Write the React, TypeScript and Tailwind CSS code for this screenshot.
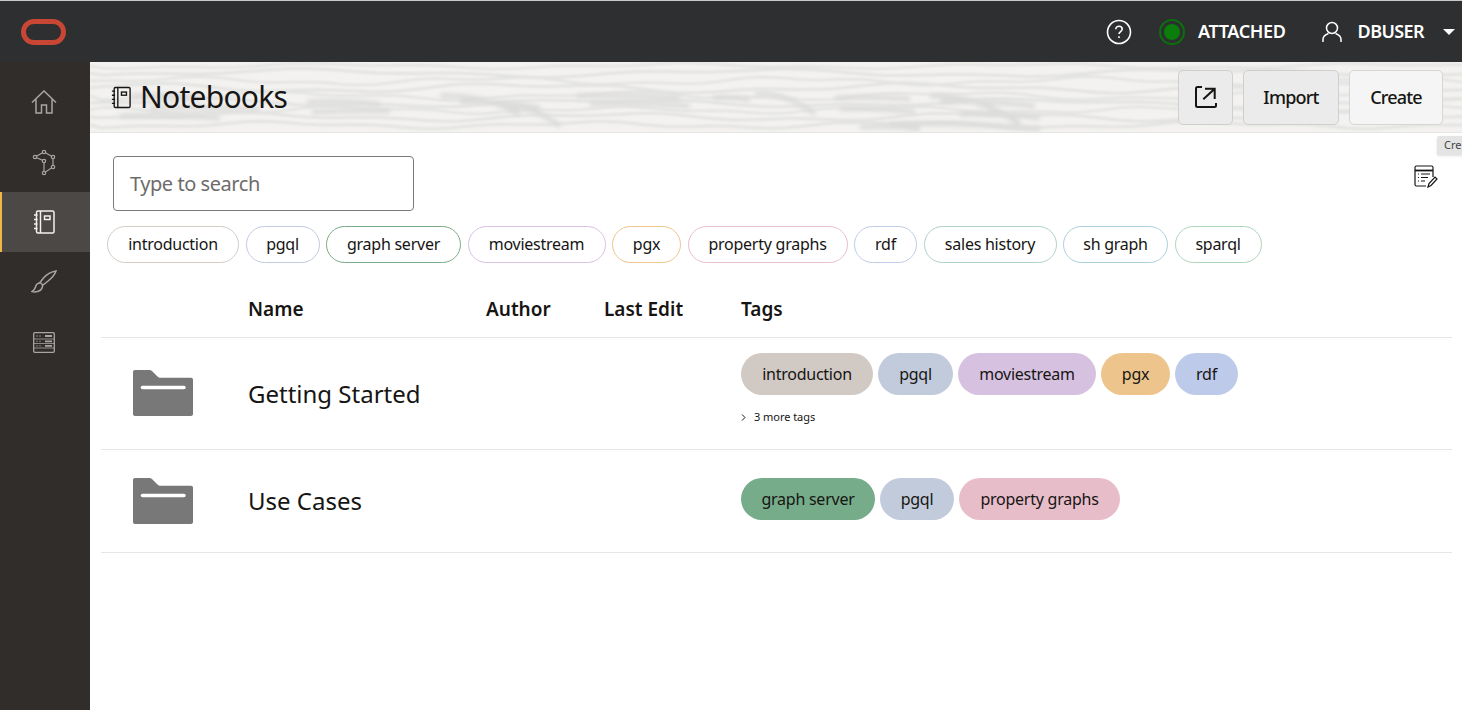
const font = { fontFamily: '"Noto Sans", sans-serif' }

const filterTags = [
  { label: 'introduction', border: 'border-[#d4cdc6]', w: 'w-[132px]' },
  { label: 'pgql', border: 'border-[#c2cbdd]', w: 'w-[74px]' },
  { label: 'graph server', border: 'border-[#7bab89]', w: 'w-[135px]' },
  { label: 'moviestream', border: 'border-[#d9c2e0]', w: 'w-[138px]' },
  { label: 'pgx', border: 'border-[#eec58c]', w: 'w-[69px]' },
  { label: 'property graphs', border: 'border-[#e9bfcb]', w: 'w-[160px]' },
  { label: 'rdf', border: 'border-[#bfcbe9]', w: 'w-[63px]' },
  { label: 'sales history', border: 'border-[#b0d2cb]', w: 'w-[133px]' },
  { label: 'sh graph', border: 'border-[#abd0dc]', w: 'w-[105px]' },
  { label: 'sparql', border: 'border-[#aed6ba]', w: 'w-[87px]' }
]

const wave = (y: number, amp: number, f: number, p: number) => {
  let d = `M0 ${y}`
  for (let x = 12; x <= 1380; x += 12) {
    const v = y + amp * Math.sin(x * f + p) + (amp / 2) * Math.sin(x * f * 2.7 + p * 1.8)
    d += ` L${x} ${v.toFixed(1)}`
  }
  return d
}

const waves = [
  [4, 2, 0.018, 0.4, 2.5],
  [11, 3, 0.014, 1.7, 3],
  [19, 3, 0.021, 2.6, 2.5],
  [26, 3.5, 0.016, 4.1, 3],
  [34, 3, 0.019, 0.9, 2.5],
  [41, 3, 0.015, 3.2, 3],
  [48, 2.5, 0.023, 5.1, 2.5],
  [55, 3, 0.017, 2.1, 3],
  [63, 2.5, 0.02, 1.1, 3]
]

const patches = [
  [40, 34, 110, 35],
  [60, 46, 170, 47],
  [30, 54, 130, 56],
  [217, 40, 290, 42],
  [222, 50, 300, 49],
  [350, 34, 430, 52],
  [370, 40, 450, 46],
  [410, 44, 470, 64],
  [487, 34, 590, 36],
  [500, 42, 600, 44],
  [623, 36, 660, 38],
  [665, 32, 725, 52],
  [745, 36, 820, 37],
  [750, 47, 825, 50],
  [770, 65, 830, 67],
  [840, 34, 930, 62],
  [850, 40, 945, 44],
  [870, 52, 950, 56],
  [800, 62, 950, 67]
]

function Banner() {
  return (
    <svg className="absolute inset-0 h-full w-full" viewBox="0 0 1372 70" preserveAspectRatio="none">
      <defs>
        <filter id="soft">
          <feGaussianBlur stdDeviation="0.9" />
        </filter>
        <filter id="softer">
          <feGaussianBlur stdDeviation="2.2" />
        </filter>
      </defs>
      <g fill="none" stroke="#e3e3e1" filter="url(#soft)">
        {waves.map(([y, a, f, p, w]) => (
          <path key={y} d={wave(y, a, f, p)} strokeWidth={w} />
        ))}
      </g>
      <g fill="none" stroke="#dcdcdb" strokeWidth="5" filter="url(#softer)">
        {patches.map(([x, y, x2, y2]) => (
          <path key={`${x}-${y}`} d={`M${x} ${y} Q${(x + x2) / 2} ${y - 2} ${x2} ${y2}`} />
        ))}
      </g>
    </svg>
  )
}

function NotebookIcon({ className }: { className?: string }) {
  return (
    <svg className={className} viewBox="0 0 22 24" fill="none" stroke="currentColor" strokeWidth="1.5">
      <rect x="3.500" y="1" width="17.500" height="22" rx="1.500" />
      <path d="M7.500 1v22" />
      <rect x="11.500" y="6" width="5.500" height="3.500" />
      <path d="M1 5h3.500M1 9.500h3.500M1 14h3.500M1 18.500h3.500" />
    </svg>
  )
}

function FolderIcon() {
  return (
    <svg className="h-[46px] w-[60px]" viewBox="0 0 60 46">
      <path
        d="M2 0h14c1.500 0 2.500.5 3.500 1.500l5 5c1 1 1.700 1.300 3 1.300H58c1.200 0 2 .8 2 2V44c0 1.200-.8 2-2 2H2c-1.200 0-2-.8-2-2V2C0 .8.800 0 2 0z"
        fill="#787878"
      />
      <rect x="7.700" y="15.700" width="45" height="3.500" rx="1.700" fill="#fff" />
    </svg>
  )
}

function SideItem({ active, children }: { active?: boolean; children: React.ReactNode }) {
  return (
    <div
      className={
        active
          ? 'flex h-[60px] items-center justify-center border-l-2 border-[#f0b648] bg-[#4b4845] pr-[5px]'
          : 'flex h-[60px] items-center justify-center pr-[3px]'
      }
    >
      {children}
    </div>
  )
}

function Tag({ label, bg, w }: { label: string; bg: string; w: string }) {
  return (
    <span className={`flex h-[42px] items-center justify-center rounded-[21px] text-[16px] tracking-[-0.25px] text-[#161513] ${bg} ${w}`}>
      {label}
    </span>
  )
}

function App() {
  return (
    <div className="flex h-[710px] w-[1462px] flex-col overflow-hidden bg-white" style={font}>
      <header className="flex h-[62px] shrink-0 items-center border-t border-[#c9c9c9] bg-[#2d2f31] pl-[21px] text-white">
        <div className="h-[26px] w-[45px] rounded-[13px] border-[5px] border-[#c74634]" />
        <div className="ml-auto flex items-center">
          <svg className="h-[26px] w-[26px]" viewBox="0 0 26 26" fill="none" stroke="white" strokeWidth="1.600">
            <circle cx="13" cy="13" r="11.500" />
            <path d="M9.800 10.300c0-1.900 1.400-3.100 3.200-3.100s3.200 1.200 3.200 2.900c0 2.500-3.200 2.500-3.200 5" />
            <path d="M13 17.300v1.800" />
          </svg>
          <span className="ml-[27px] flex h-[26px] w-[26px] items-center justify-center rounded-full border-2 border-[#0b700b]">
            <span className="h-[16px] w-[16px] rounded-full bg-[#0a7d0a]" />
          </span>
          <span className="ml-[13px] text-[18px] font-semibold tracking-[-0.35px]">ATTACHED</span>
          <svg className="ml-[36px] h-[22px] w-[20px]" viewBox="0 0 20 22" fill="none" stroke="white" strokeWidth="1.500">
            <circle cx="10" cy="7" r="5.500" />
            <path d="M1 21v-2.500c0-3 2.500-5 5.500-6M19 21v-2.500c0-3-2.500-5-5.500-6" />
          </svg>
          <span className="ml-[16px] text-[18px] font-semibold tracking-[-0.6px]">DBUSER</span>
          <span className="ml-[19px] mr-[7px] h-0 w-0 border-x-[6px] border-t-[6px] border-x-transparent border-t-white" />
        </div>
      </header>

      <div className="flex min-h-0 flex-1">
        <nav className="w-[90px] shrink-0 bg-[#312d2a] pt-[10px] text-[#a8a5a2]">
          <SideItem>
            <svg className="h-[24px] w-[26px]" viewBox="0 0 26 24" fill="none" stroke="currentColor" strokeWidth="1.500">
              <path d="M1 12.500L13 1l12 11.500M5 9.500V23h5.500v-8h5v8H21V9.500" />
            </svg>
          </SideItem>
          <SideItem>
            <svg className="h-[27px] w-[24px]" viewBox="0 0 24 27" fill="none" stroke="currentColor" strokeWidth="1.200">
              <path d="M3 8l9-5 9 5v10l-9 6V12L3 8z" />
              <circle cx="3" cy="8" r="1.700" fill="#312d2a" />
              <circle cx="12" cy="3" r="1.700" fill="#312d2a" />
              <circle cx="21" cy="8" r="1.700" fill="#312d2a" />
              <circle cx="12" cy="12" r="1.700" fill="#312d2a" />
              <circle cx="21" cy="18" r="1.700" fill="#312d2a" />
              <circle cx="12" cy="24" r="1.700" fill="#312d2a" />
            </svg>
          </SideItem>
          <SideItem active>
            <NotebookIcon className="h-[24px] w-[22px] text-[#f2f1ef]" />
          </SideItem>
          <SideItem>
            <svg className="h-[24px] w-[26px]" viewBox="0 0 26 24" fill="none" stroke="currentColor" strokeWidth="1.500">
              <path d="M25 1c-3 .5-9 3-12.500 7L9 12.500l3 2.500 4.500-3.500C21 8 24 4 25 1z" />
              <path d="M9 13c-3 0-4 2-4.500 4-.5 2-2 3.500-3.500 4.500 3.500 1 8 0 9.500-2.500 1-1.700 1-3.500.5-4" />
            </svg>
          </SideItem>
          <SideItem>
            <svg className="h-[21px] w-[22px]" viewBox="0 0 22 21" fill="none" stroke="currentColor" strokeWidth="1.300">
              <rect x=".7" y=".7" width="20.600" height="19.600" rx="1" />
              <path d="M1 7h20M1 11.500h20M1 16h20" strokeWidth=".8" />
              <path d="M3.500 4h1M6.500 4h1M3.500 9.300h1M6.500 9.300h1M3.500 13.800h1M6.500 13.800h1" />
              <path d="M12 4h7M12 9.300h7M12 13.800h7" strokeWidth="1.800" />
            </svg>
          </SideItem>
        </nav>

        <main className="relative min-w-0 flex-1">
          <div className="relative flex h-[71px] items-center justify-between overflow-hidden border-b border-[#e6e6e4] bg-[#f3f2f0] pl-[21px] pr-[19px]">
            <Banner />
            <div className="relative flex items-center text-[#161513]">
              <NotebookIcon className="h-[23px] w-[20px]" />
              <h1 className="ml-[9px] text-[30px] leading-none tracking-[-0.75px]">Notebooks</h1>
            </div>
            <div className="relative flex gap-[10px] text-[18px] font-medium tracking-[-0.8px] text-[#161513]">
              <button className="flex h-[55px] w-[55px] items-center justify-center rounded-[5px] border border-[#cfcfcd] bg-[#ebebeb]">
                <svg className="h-[22px] w-[22px]" viewBox="0 0 22 22" fill="none" stroke="#161513" strokeWidth="2">
                  <path d="M7 1H2.500C1.500 1 1 1.500 1 2.500v17c0 1 .5 1.500 1.500 1.500h17c1 0 1.500-.5 1.500-1.500V17" />
                  <path d="M8.300 13.300L19.700 2.700M10 2.700h9.700V13" />
                </svg>
              </button>
              <button className="flex h-[55px] w-[96px] items-center justify-center rounded-[5px] border border-[#cfcfcd] bg-[#ebebeb]">
                Import
              </button>
              <button className="flex h-[55px] w-[94px] items-center justify-center rounded-[5px] border border-[#d6d6d4] bg-[#f5f5f5]">
                Create
              </button>
            </div>
          </div>

          <div className="absolute left-[1347px] top-[74px] flex h-[19px] w-[30px] items-center rounded-[2px] bg-[#e4e4e4] pl-[7px] text-[11px] text-[#444] shadow-sm">
            Cre
          </div>

          <div className="pl-[11px] pr-[10px]">
            <div className="flex items-center justify-between pl-[12px] pr-[14px] pt-[23px]">
              <div className="flex h-[55px] w-[301px] items-center rounded-[4px] border border-[#7b7a78] pl-[16px] text-[20px] tracking-[-0.45px] text-[#6d6c6a]">
                Type to search
              </div>
              <svg className="mb-[13px] h-[24px] w-[24px]" viewBox="0 0 24 24" fill="none" stroke="#161513" strokeWidth="1.200">
                <path d="M19 12V2.500C19 1.500 18.500 1 17.500 1h-15C1.500 1 1 1.500 1 2.500v17c0 1 .5 1.500 1.500 1.500H12" />
                <path d="M1 5.500h18" strokeWidth="1.800" />
                <path d="M4 9h1M7 9h9M4 12.500h1M7 12.500h7M4 16h1M7 16h4" />
                <path d="M14 22l1-3.500 6-6.500 2 2-6 6.500-3 1.500z" />
              </svg>
            </div>
            <div className="mt-[15px] flex gap-[6.5px] pl-[6px]">
              {filterTags.map((t) => (
                <span
                  key={t.label}
                  className={`flex h-[37px] items-center justify-center rounded-[19px] border pb-[2px] text-[16px] tracking-[-0.25px] text-[#161513] ${t.border} ${t.w}`}
                >
                  {t.label}
                </span>
              ))}
            </div>
            <div className="mt-[12px] grid h-[63px] grid-cols-[147px_238px_118px_137px_1fr] items-center border-b border-[#e7e7e6] pt-[7px] text-[19px] font-semibold text-[#161513]">
              <span />
              <span>Name</span>
              <span>Author</span>
              <span>Last Edit</span>
              <span>Tags</span>
            </div>
            <div className="grid h-[112px] grid-cols-[147px_493px_1fr] border-b border-[#e7e7e6] text-[#161513]">
              <div className="flex items-center pb-[2px] pl-[32px]">
                <FolderIcon />
              </div>
              <div className="flex items-center text-[24px]">Getting Started</div>
              <div className="pt-[15px]">
                <div className="flex gap-[5px]">
                  <Tag label="introduction" bg="bg-[#d1c9c3]" w="w-[132px]" />
                  <Tag label="pgql" bg="bg-[#c1cbdb]" w="w-[75px]" />
                  <Tag label="moviestream" bg="bg-[#d7c1e0]" w="w-[138px]" />
                  <Tag label="pgx" bg="bg-[#edc58c]" w="w-[69px]" />
                  <Tag label="rdf" bg="bg-[#bdcae9]" w="w-[63px]" />
                </div>
                <div className="mt-[14px] flex items-center text-[11px] tracking-[-0.05px]">
                  <svg className="h-[7px] w-[5px]" viewBox="0 0 5 7" fill="none" stroke="#161513" strokeWidth="1">
                    <path d="M1 .5l3 3-3 3" />
                  </svg>
                  <span className="ml-[8px]">3 more tags</span>
                </div>
              </div>
            </div>
            <div className="grid h-[103px] grid-cols-[147px_493px_1fr] border-b border-[#e7e7e6] text-[#161513]">
              <div className="flex items-center pb-[1px] pl-[32px]">
                <FolderIcon />
              </div>
              <div className="flex items-center text-[24px]">Use Cases</div>
              <div className="pt-[28px]">
                <div className="flex gap-[5px]">
                  <Tag label="graph server" bg="bg-[#77ac8a]" w="w-[134px]" />
                  <Tag label="pgql" bg="bg-[#c1cbdb]" w="w-[74px]" />
                  <Tag label="property graphs" bg="bg-[#e8bdca]" w="w-[161px]" />
                </div>
              </div>
            </div>
          </div>
        </main>
      </div>
    </div>
  )
}

export default App
